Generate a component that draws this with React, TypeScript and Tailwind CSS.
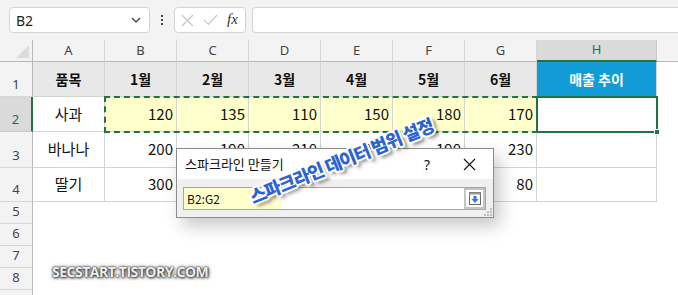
import React from "react";

const KR = "font-['Noto_Sans_CJK_KR','Noto_Sans',sans-serif]";

const cols = ["A", "B", "C", "D", "E", "F", "G", "H"];

const rows: { h: string; cells: string[] }[] = [
  { h: "h-[35px]", cells: ["품목", "1월", "2월", "3월", "4월", "5월", "6월", "매출 추이"] },
  { h: "h-[35px]", cells: ["사과", "120", "135", "110", "150", "180", "170", ""] },
  { h: "h-[36px]", cells: ["바나나", "200", "190", "210", "220", "190", "230", ""] },
  { h: "h-[34px]", cells: ["딸기", "300", "250", "240", "260", "270", "80", ""] },
];

const ColHeader = ({ label, active }: { label: string; active?: boolean }) => (
  <div
    className={`flex items-center justify-center border-r border-b text-[13px] font-['Noto_Sans',sans-serif] ${
      active
        ? "bg-[#dadada] border-r-[#c8c8c8] border-b-2 border-b-[#217346] text-[#217346]"
        : "bg-[#f3f3f3] border-r-[#d6d6d6] border-b-[#b8b8b8] text-[#444]"
    } ${label === "H" ? "w-[120px]" : "w-[72px]"}`}
  >
    {label}
  </div>
);

const RowHeader = ({ n, h, active }: { n: number; h: string; active?: boolean }) => (
  <div
    className={`w-[33px] ${h} shrink-0 flex items-end justify-center pb-[2px] border-b border-r text-[13px] font-['Noto_Sans',sans-serif] ${
      active
        ? "bg-[#dadada] border-r-2 border-r-[#217346] border-b-[#c8c8c8] text-[#217346]"
        : "bg-[#f3f3f3] border-r-[#b8b8b8] border-b-[#d6d6d6] text-[#444]"
    }`}
  >
    {n}
  </div>
);

export default function App() {
  return (
    <div className={`relative w-[678px] h-[295px] overflow-hidden bg-white ${KR}`}>
      {/* formula bar */}
      <div className="h-[40px] bg-[#f3f3f3] flex items-start pt-[7px] pl-[9px] gap-[6px]">
        <div className="w-[141px] h-[26px] bg-white border border-[#d4d4d4] rounded-[4px] flex items-center justify-between pl-[6px] pr-[8px]">
          <span className="text-[14px] text-[#222] font-['Noto_Sans',sans-serif]">B2</span>
          <svg width="10" height="6" viewBox="0 0 10 6">
            <path d="M1 1 L5 5 L9 1" stroke="#444" strokeWidth="1.3" fill="none" />
          </svg>
        </div>
        <div className="w-[12px] h-[26px] flex flex-col items-center justify-center gap-[2px]">
          <span className="w-[2px] h-[2px] bg-[#444]" />
          <span className="w-[2px] h-[2px] bg-[#444]" />
          <span className="w-[2px] h-[2px] bg-[#444]" />
        </div>
        <div className="w-[72px] h-[26px] bg-white border border-[#d4d4d4] rounded-[4px] flex items-center gap-[9px] pl-[6px]">
          <svg width="13" height="13" viewBox="0 0 13 13">
            <path d="M1 1 L12 12 M12 1 L1 12" stroke="#c6c6c6" strokeWidth="1.2" />
          </svg>
          <svg width="15" height="12" viewBox="0 0 15 12">
            <path d="M1 6 L5.5 10.5 L14 1" stroke="#c6c6c6" strokeWidth="1.2" fill="none" />
          </svg>
          <span className="text-[15px] italic text-[#333] font-['Liberation_Serif',serif] -mt-[2px]">fx</span>
        </div>
        <div className="flex-1 h-[26px] bg-white border border-[#d4d4d4] rounded-l-[4px] border-r-0" />
      </div>

      {/* column headers */}
      <div className="flex h-[22px]">
        <div className="w-[33px] h-[22px] bg-[#f3f3f3] border-r border-b border-[#b8b8b8] flex items-end justify-end p-[3px]">
          <svg width="13" height="13" viewBox="0 0 13 13">
            <path d="M13 0 L13 13 L0 13 Z" fill="#dcdcdc" />
          </svg>
        </div>
        {cols.map((c) => (
          <ColHeader key={c} label={c} active={c === "H"} />
        ))}
        <div className="flex-1 bg-[#f3f3f3] border-b border-[#b8b8b8]" />
      </div>

      {/* data rows */}
      {rows.map((r, ri) => (
        <div key={ri} className="flex">
          <RowHeader n={ri + 1} h={r.h} active={ri === 1} />
          {r.cells.map((v, ci) => {
            const isHead = ri === 0;
            const isH = ci === 7;
            let bg = "bg-white";
            if (isHead) bg = isH ? "bg-[#119cd6]" : "bg-[#e8e8e8]";
            else if (ri === 1 && ci > 0 && ci < 7) bg = "bg-[#ffffcc]";
            const align =
              isHead || ci === 0 ? "justify-center" : "justify-end pr-[3px]";
            return (
              <div
                key={ci}
                className={`${isH ? "w-[120px]" : "w-[72px]"} ${r.h} ${bg} ${align} flex items-center border-r border-b border-[#d4d4d4] ${
                  isHead
                    ? `font-bold text-[14px] ${isH ? "text-white" : "text-[#111]"}`
                    : "text-[15px] text-[#111]"
                }`}
              >
                {v}
              </div>
            );
          })}
        </div>
      ))}

      {/* empty rows 5-8 */}
      <div className="flex flex-col w-[33px]">
        {[5, 6, 7, 8].map((n) => (
          <div
            key={n}
            className="w-[33px] h-[22px] shrink-0 flex items-end justify-center pb-[2px] bg-[#f3f3f3] border-r border-b border-r-[#b8b8b8] border-b-[#d6d6d6] text-[13px] text-[#444] font-['Noto_Sans',sans-serif]"
          >
            {n}
          </div>
        ))}
        <div className="w-[33px] h-[5px] bg-[#f3f3f3] border-r border-[#b8b8b8]" />
      </div>

      {/* copy range marquee B2:G2 */}
      <div className="absolute left-[104px] top-[96px] w-[434px] h-[37px] border-2 border-dashed border-[#217346]" />
      {/* active cell H2 */}
      <div className="absolute left-[536px] top-[96px] w-[122px] h-[37px] border-2 border-[#217346]">
        <div className="absolute -right-[4px] -bottom-[4px] w-[6px] h-[6px] bg-[#217346] border border-white" />
      </div>

      {/* dialog */}
      <div className="absolute left-[176px] top-[148px] w-[318px] h-[70px] border border-[#8c8c8c] bg-[#f0f0f0] shadow-[6px_8px_16px_rgba(0,0,0,0.22)] flex flex-col">
        <div className="h-[30px] bg-white flex items-center pl-[8px] text-[13px] text-[#111]">
          <span className="flex-1">스파크라인 만들기</span>
          <span className="w-[20px] text-center text-[14px] font-['Noto_Sans',sans-serif] mr-[26px]">?</span>
          <svg width="13" height="13" viewBox="0 0 13 13" className="mr-[17px]">
            <path d="M1 1 L12 12 M12 1 L1 12" stroke="#111" strokeWidth="1.1" />
          </svg>
        </div>
        <div className="flex-1 relative pl-[6px] pt-[8px]">
          <div className="w-[303px] h-[23px] bg-white border border-[#a6a6a6] flex items-stretch">
            <div className="w-[98px] bg-[#ffffcc] flex items-center pl-[3px] text-[12px] text-[#111]">B2:G2</div>
            <div className="flex-1" />
            <div className="w-[21px] border-2 border-[#c4c4c4] bg-white flex items-center justify-center">
              <svg width="12" height="13" viewBox="0 0 12 13">
                <rect x="0.5" y="0.5" width="11" height="12" fill="white" stroke="#6b6b6b" />
                <rect x="0.5" y="0.5" width="11" height="2" fill="#9a9a9a" />
                <path d="M4.5 4 H7.5 V7 H9.5 L6 11 L2.5 7 H4.5 Z" fill="#2f7ad6" />
              </svg>
            </div>
          </div>
          <svg width="8" height="8" viewBox="0 0 8 8" className="absolute right-[1px] bottom-[1px]">
            <rect x="6" y="0" width="2" height="2" fill="#bcbcbc" />
            <rect x="3" y="3" width="2" height="2" fill="#bcbcbc" />
            <rect x="6" y="3" width="2" height="2" fill="#bcbcbc" />
            <rect x="0" y="6" width="2" height="2" fill="#bcbcbc" />
            <rect x="3" y="6" width="2" height="2" fill="#bcbcbc" />
            <rect x="6" y="6" width="2" height="2" fill="#bcbcbc" />
          </svg>
        </div>
      </div>

      {/* annotation */}
      <div className="absolute left-[243px] top-[151px] w-[196px] text-center -rotate-[22deg] text-[18px] tracking-[-1px] font-black text-[#2d62d4] whitespace-nowrap leading-none [text-shadow:-1.5px_-1.5px_0_#fff,1.5px_-1.5px_0_#fff,-1.5px_1.5px_0_#fff,1.5px_1.5px_0_#fff,0_-2px_0_#fff,0_2px_0_#fff,-2px_0_0_#fff,2px_0_0_#fff,3px_4px_4px_rgba(0,0,0,0.6)]">
        스파크라인 데이터 범위 설정
      </div>

      {/* watermark */}
      <div className="absolute left-[52px] top-[261px] text-[14px] font-bold tracking-[-0.5px] text-[#ededed] font-['Open_Sans',sans-serif] [text-shadow:0_0_1px_#444,0_0_2px_#444,1px_1px_3px_rgba(0,0,0,0.75),0_0_4px_rgba(0,0,0,0.55)]">
        SECSTART.TISTORY.COM
      </div>
    </div>
  );
}
